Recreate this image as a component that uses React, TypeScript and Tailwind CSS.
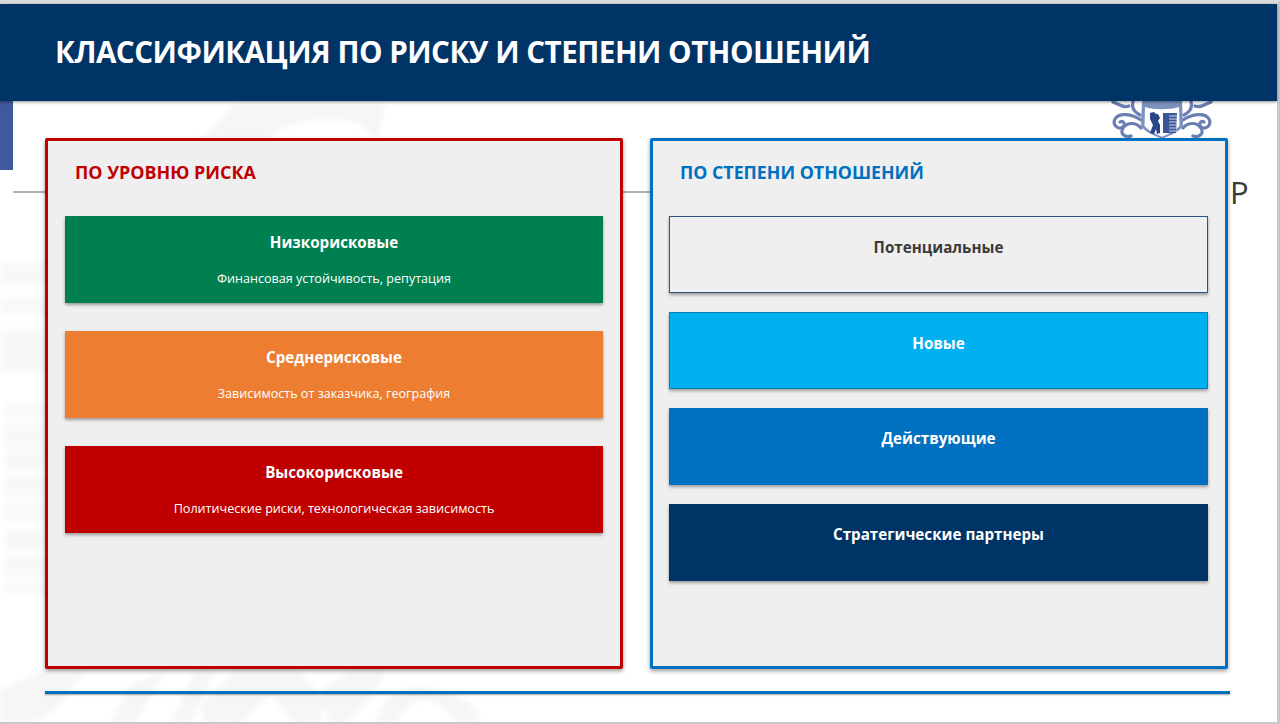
const FONT = "font-['Open_Sans','Noto_Sans',sans-serif]";

function Watermark() {
  return (
    <svg className="absolute inset-0 w-full h-full blur-[2px]" viewBox="0 0 1280 724" fill="none">
      <g fill="#f6f6f6">
        <path d="M200 140 L235 104 H385 L378 140 L360 125 C330 115 290 118 265 140 Z" />
        <path d="M0 724 L0 690 L40 672 L85 672 L55 710 L30 724 Z" />
        <path d="M110 724 L130 685 L165 672 L135 724 Z" />
        <path d="M170 724 L195 672 L215 672 L190 724 Z" />
        <path d="M200 705 L235 672 H300 L325 700 L320 724 H295 L270 695 L240 724 H205 Z" />
        <path d="M320 690 L350 672 H385 L370 700 L345 724 H330 Z" />
        <path d="M375 724 C385 690 410 680 440 690 C470 700 480 710 480 724 H455 C450 705 425 695 410 705 L395 724 Z" />
      </g>
      <g fill="#f8f8f8">
        <rect x="0" y="262" width="45" height="22" />
        <rect x="0" y="298" width="45" height="16" />
        <rect x="0" y="330" width="45" height="42" />
        <rect x="5" y="405" width="40" height="12" />
        <rect x="5" y="422" width="40" height="26" />
        <rect x="5" y="450" width="40" height="20" />
        <rect x="5" y="475" width="40" height="22" />
        <rect x="5" y="502" width="40" height="20" />
        <rect x="5" y="530" width="40" height="20" />
        <rect x="5" y="555" width="40" height="22" />
        <rect x="5" y="582" width="40" height="12" />
      </g>
    </svg>
  );
}

function Crest() {
  return (
    <svg className="absolute left-[1110px] top-[101px] blur-[0.4px]" width="104" height="38" viewBox="0 0 104 38" fill="none">
      <g stroke="#6a7fb2" strokeWidth="3.2" strokeLinecap="round">
        <path d="M3 1 C10 4 14 7 19 5 M23 1 C21 8 26 12 30 14" />
        <path d="M31 19 C22 13 9 11 5 18 C2 24 8 29 13 26 C16 23 13 19 10 21" />
        <path d="M31 27 C26 21 17 21 13 27 C10 32 14 37 21 35" />
        <path d="M101 1 C94 4 90 7 85 5 M81 1 C83 8 78 12 74 14" />
        <path d="M73 19 C82 13 95 11 99 18 C102 24 96 29 91 26 C88 23 91 19 94 21" />
        <path d="M73 27 C78 21 87 21 91 27 C94 32 90 37 83 35" />
      </g>
      <path d="M32 0 H72 L73 25 C68 32 60 34 52 38 C44 34 36 32 31 25 Z" fill="#7d91bf" />
      <path d="M35 6 C44 9 60 9 69 6 L69.5 25 C65 30 58 33 52 36 C46 33 39 30 34.5 25 Z" fill="#ffffff" />
      <path d="M40 12 L44 11 L46 13 L48 13 L50 17 L48 20 L50 24 L50 32 L47 33 L46 28 L44 33 L40 32 L43 24 L40 18 Z" fill="#2a4488" />
      <path d="M53 12 H67 L66 32 H53 Z" fill="#3a5598" />
      <path d="M59 15 H67 M59 18 H67 M59 21 H67 M59 24 H67 M59 27 H67 M59 30 H67" stroke="#cdd6ea" strokeWidth="1" />
    </svg>
  );
}

function RiskBox({ title, sub, color }: { title: string; sub: string; color: string }) {
  return (
    <div className={`h-[87px] shadow-[0_2px_3px_rgba(0,0,0,0.35)] flex flex-col items-center text-white ${color}`}>
      <div className="mt-[15px] text-[15.2px] leading-[22px] font-bold">{title}</div>
      <div className="mt-[17px] text-[12.6px] leading-[18px]">{sub}</div>
    </div>
  );
}

function RelBox({ title, className }: { title: string; className: string }) {
  return (
    <div className={`h-[77px] shadow-[0_2px_3px_rgba(0,0,0,0.35)] flex justify-center text-[15.2px] leading-[22px] font-bold ${className}`}>
      <div className="mt-[19px]">{title}</div>
    </div>
  );
}

export default function App() {
  return (
    <div className={`${FONT} relative w-[1280px] h-[724px] overflow-hidden bg-white`}>
      <Watermark />
      <Crest />
      <div className="absolute left-0 top-[101px] w-[13px] h-[69px] bg-[#3f5a9c]" />
      <div className="absolute left-[13px] w-[1200px] top-[191px] h-[2px] bg-[#b0b0b0]" />
      <div className="absolute left-[1230px] top-[172px] text-[31px] leading-[40px] text-[#3a3a3a]">P</div>

      <div className="relative flex flex-col h-full border-t-[4px] border-t-[#dcdcdc] border-r-[3px] border-r-[#c8c8c8] border-b-[2px] border-b-[#c8c8c8]">
        <header className="h-[97px] shrink-0 bg-[#003366] shadow-[0_1px_3px_rgba(0,0,0,0.45)] flex items-center pl-[55px] pb-[2px]">
          <h1 className="text-[29.6px] leading-[40px] font-bold text-white whitespace-nowrap tracking-[-0.5px]">КЛАССИФИКАЦИЯ ПО РИСКУ И СТЕПЕНИ ОТНОШЕНИЙ</h1>
        </header>

        <div className="flex gap-[27px] pl-[45px] mt-[37px]">
          <section className="w-[578px] h-[531px] border-[3px] border-[#c00000] bg-[#efefef] rounded-[2px] shadow-[0_2px_4px_rgba(0,0,0,0.4)] px-[17px]">
            <h2 className="mt-[19px] ml-[10px] h-[24px] text-[17.9px] leading-[24px] font-bold text-[#c00000]">ПО УРОВНЮ РИСКА</h2>
            <div className="mt-[32px] flex flex-col gap-[28px]">
              <RiskBox title="Низкорисковые" sub="Финансовая устойчивость, репутация" color="bg-[#008050]" />
              <RiskBox title="Среднерисковые" sub="Зависимость от заказчика, география" color="bg-[#ed7d31]" />
              <RiskBox title="Высокорисковые" sub="Политические риски, технологическая зависимость" color="bg-[#c00000]" />
            </div>
          </section>

          <section className="w-[578px] h-[531px] border-[3px] border-[#0070c0] bg-[#efefef] rounded-[2px] shadow-[0_2px_4px_rgba(0,0,0,0.4)] pl-[16px] pr-[17px]">
            <h2 className="mt-[19px] ml-[11px] h-[24px] text-[17.8px] leading-[24px] font-bold text-[#0070c0]">ПО СТЕПЕНИ ОТНОШЕНИЙ</h2>
            <div className="mt-[32px] flex flex-col gap-[19px]">
              <RelBox title="Потенциальные" className="bg-[#efefef] border border-[#2f5380] text-[#3a3a3a]" />
              <RelBox title="Новые" className="bg-[#00b0f0] text-white border border-[#0a7fb0]" />
              <RelBox title="Действующие" className="bg-[#0070c0] text-white" />
              <RelBox title="Стратегические партнеры" className="bg-[#003366] text-white" />
            </div>
          </section>
        </div>

        <div className="ml-[45px] mt-[22px] w-[1185px] h-[3px] bg-[#0070c0] shadow-[0_1px_2px_rgba(0,0,0,0.35)]" />
      </div>
    </div>
  );
}
